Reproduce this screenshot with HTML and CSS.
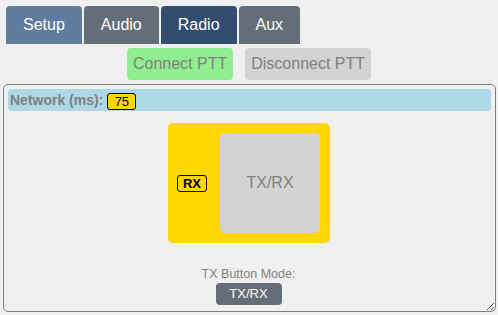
FILE: index.html
```html
<!DOCTYPE html>
<html>
<head>
<meta charset="utf-8">
<link rel="stylesheet" href="styles.css">
</head>
<body>
<div class="tabs">
  <div class="tab tab-setup">Setup</div>
  <div class="tab tab-audio">Audio</div>
  <div class="tab tab-radio">Radio</div>
  <div class="tab tab-aux">Aux</div>
</div>
<div class="actions">
  <div class="btn btn-connect">Connect PTT</div>
  <div class="btn btn-disconnect">Disconnect PTT</div>
</div>
<div class="panel">
  <div class="netbar">
    <span class="netlabel">Network (ms):</span>
    <span class="netval">75</span>
  </div>
  <div class="center">
    <div class="ybox">
      <div class="yleft"><span class="rx">RX</span></div>
      <div class="gbox">TX/RX</div>
    </div>
  </div>
  <div class="mode">
    <div class="modelabel">TX Button Mode:</div>
    <div class="modebtn">TX/RX</div>
  </div>
</div>
</body>
</html>
```
FILE: styles.css
```css
html, body {
  margin: 0;
  padding: 0;
  background: #f0f0f0;
  font-family: "Liberation Sans", Arial, sans-serif;
}
body {
  width: 498px;
  height: 315px;
  overflow: hidden;
}
.tabs {
  display: flex;
  gap: 2px;
  padding: 6px 0 0 6px;
}
.tab {
  height: 38px;
  line-height: 38px;
  padding: 0 17px;
  color: #fff;
  font-size: 16px;
  border-radius: 4px 4px 0 0;
}
.tab-setup { background: #5f7b9e; }
.tab-audio { background: #646e78; }
.tab-radio { background: #334d70; }
.tab-aux { background: #646e78; }
.actions {
  display: flex;
  justify-content: center;
  gap: 12px;
  margin-top: 4px;
}
.btn {
  height: 32px;
  line-height: 32px;
  padding: 0 6px;
  font-size: 16px;
  color: #808080;
  border-radius: 4px;
}
.btn-connect { background: #90ee90; }
.btn-disconnect { background: #d3d3d3; }
.panel {
  margin: 4px 2px 0 3px;
  height: 228px;
  border: 1px solid #808080;
  border-radius: 5px;
  padding: 4px 4px;
  box-sizing: border-box;
  resize: both;
  overflow: hidden;
}
.netbar {
  height: 22px;
  background: #add8e6;
  border-radius: 4px;
  display: flex;
  align-items: center;
  padding-left: 2px;
}
.netlabel {
  font-weight: bold;
  font-size: 14px;
  color: #808080;
}
.netval {
  margin-left: 4px;
  margin-top: 2px;
  background: #ffd700;
  border: 1px solid #000;
  border-radius: 3px;
  font-size: 13px;
  width: 27px;
  height: 15px;
  line-height: 15px;
  text-align: center;
  color: #000;
}
.center {
  display: flex;
  justify-content: center;
  margin-top: 12px;
  padding-right: 1px;
}
.ybox {
  display: flex;
  background: #ffd700;
  border-radius: 5px;
  padding: 10px 10px 10px 0;
}
.yleft {
  width: 52px;
  display: flex;
  align-items: center;
  justify-content: center;
}
.rx {
  border: 1px solid #000;
  border-radius: 3px;
  font-weight: bold;
  font-size: 13px;
  width: 28px;
  height: 15px;
  line-height: 15px;
  text-align: center;
  color: #000;
  margin-left: -4px;
}
.gbox {
  width: 100px;
  height: 100px;
  background: #d3d3d3;
  border-radius: 5px;
  display: flex;
  align-items: center;
  justify-content: center;
  font-size: 16px;
  color: #808080;
}
.mode {
  display: flex;
  flex-direction: column;
  align-items: center;
  margin-top: 24px;
  padding-right: 2px;
}
.modelabel {
  font-size: 12.5px;
  color: #808080;
  line-height: 15px;
}
.modebtn {
  margin-top: 1px;
  width: 66px;
  height: 22px;
  line-height: 22px;
  text-align: center;
  background: #646e78;
  color: #fff;
  font-size: 13px;
  border-radius: 4px;
}
```
